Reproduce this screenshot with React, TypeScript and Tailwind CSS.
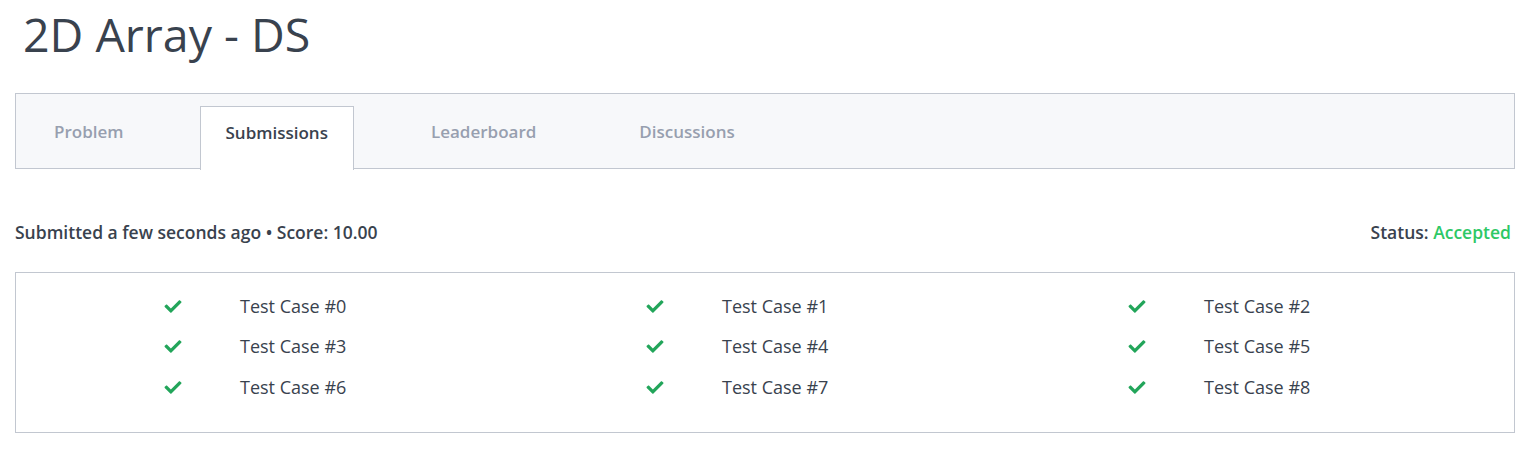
import { FaCheck } from "react-icons/fa";

const TABS = [
  { label: "Problem", ml: "ml-[38px]" },
  { label: "Submissions", ml: "ml-[76px]" },
  { label: "Leaderboard", ml: "ml-[77px]" },
  { label: "Discussions", ml: "ml-[103px]" },
];

const CASES = Array.from({ length: 9 }, (_, i) => `Test Case #${i}`);

export default function App() {
  return (
    <div className="min-h-screen bg-white text-[#39424e] font-['Open_Sans',sans-serif]">
      <h1 className="pl-[23px] pt-[7px] text-[46.5px] leading-[54px] font-normal">2D Array - DS</h1>

      <div className="ml-[15px] mr-[8px] mt-[32px] h-[76px] border border-[#c2c7d0] bg-[#f7f8fa] flex items-end">
        {TABS.map((t) => {
          const active = t.label === "Submissions";
          return (
            <div
              key={t.label}
              className={`${t.ml} h-[64px] -mb-[2px] flex items-start pt-[14px] text-[17px] leading-[24px] font-semibold ${
                active
                  ? "bg-white border border-b-0 border-[#c2c7d0] text-[#39424e] px-[25px]"
                  : "text-[#979faf]"
              }`}
            >
              {t.label}
            </div>
          );
        })}
      </div>

      <div className="ml-[15px] mr-[12px] mt-[50px] flex justify-between items-center text-[17.5px] font-semibold">
        <span>Submitted a few seconds ago • Score: 10.00</span>
        <span>
          Status: <span className="text-[#2ec866]">Accepted</span>
        </span>
      </div>

      <div className="ml-[15px] mr-[8px] mt-[27px] h-[161px] border border-[#c2c7d0] px-[26px] pt-[22px]">
        <div className="grid grid-cols-3 gap-y-[18.5px]">
          {CASES.map((c) => (
            <div key={c} className="flex items-center h-[22px] text-[18px]">
              <FaCheck className="ml-[121px] text-[#22a55a] w-[20px] h-[17px]" />
              <span className="ml-[57px]">{c}</span>
            </div>
          ))}
        </div>
      </div>
    </div>
  );
}
